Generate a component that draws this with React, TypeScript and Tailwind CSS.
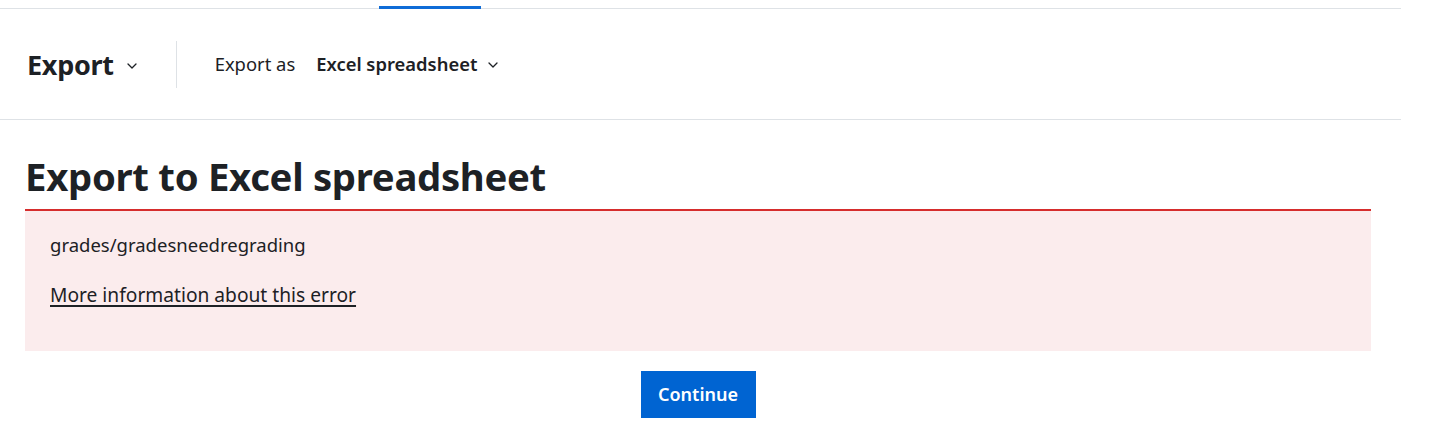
import React from "react";

function Chevron({ className }: { className?: string }) {
  return (
    <svg className={className} width="10" height="6" viewBox="0 0 10 6" fill="none">
      <path d="M1 1l4 4 4-4" stroke="#1d2125" strokeWidth="1.3" strokeLinecap="round" strokeLinejoin="round" />
    </svg>
  );
}

export default function App() {
  return (
    <div className="w-[1431px] bg-white text-[#1d2125]" style={{ fontFamily: '"Noto Sans", "Open Sans", sans-serif' }}>
      <div className="w-[1401px]">
        <div className="h-[9px] border-b border-[#dee2e6] pt-[6px]">
          <div className="relative ml-[379px] h-[3px] w-[102px] bg-[#0f6cd7]" />
        </div>
        <div className="flex h-[111px] items-center border-b border-[#dee2e6] pl-[27px]">
          <div className="flex items-center">
            <span className="text-[27px] font-bold leading-none tracking-[-0.3px]">Export</span>
            <Chevron className="ml-[13px] mt-[4px]" />
          </div>
          <div className="ml-[39px] h-[47px] w-px bg-[#dee2e6]" />
          <div className="ml-[38px] flex items-center">
            <span className="text-[18.4px] leading-none">Export as</span>
            <span className="ml-[21px] text-[18.4px] font-semibold leading-none">Excel spreadsheet</span>
            <Chevron className="ml-[11px] mt-[2px]" />
          </div>
        </div>
      </div>
      <div className="w-[1371px] pl-[25px]">
        <h1 className="mt-[28px] text-[38.3px] font-bold leading-[56px] tracking-[-0.3px]">Export to Excel spreadsheet</h1>
        <div className="mt-[5px] h-[142px] border-t-2 border-[#d62d2d] bg-[#fbeced] px-[25px] pt-[20px]">
          <p className="text-[18.5px] leading-[28px]">grades/gradesneedregrading</p>
          <p className="mt-[22px] text-[19.2px] leading-[28px]">
            <a href="#" className="underline decoration-[1.5px] underline-offset-[3px]">More information about this error</a>
          </p>
        </div>
        <div className="mt-[20px] flex justify-center">
          <button className="h-[47px] w-[115px] bg-[#0064d2] text-[18px] font-semibold text-white">Continue</button>
        </div>
      </div>
    </div>
  );
}
